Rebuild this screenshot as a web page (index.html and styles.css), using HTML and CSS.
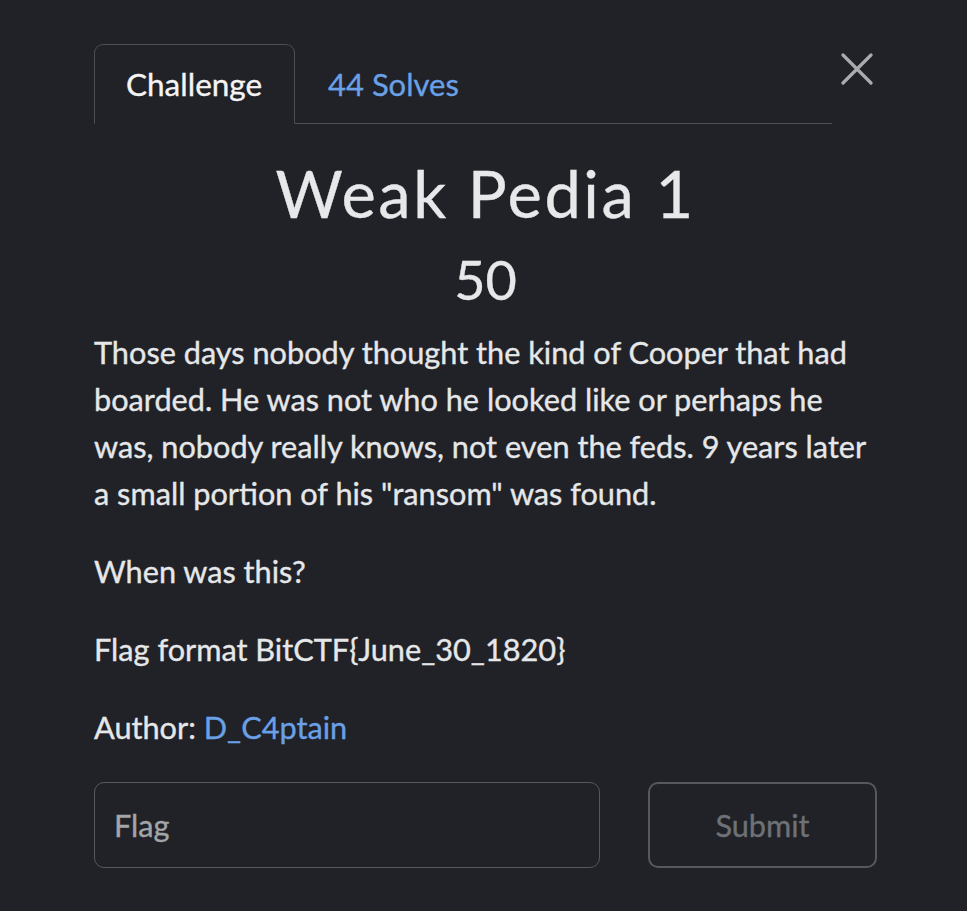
FILE: index.html
```html
<!DOCTYPE html>
<html>
<head>
<meta charset="utf-8">
<link rel="stylesheet" href="styles.css">
</head>
<body>
<div class="modal">
  <div class="top">
    <ul class="tabs">
      <li class="tab active">Challenge</li>
      <li class="tab link">44 Solves</li>
    </ul>
    <button class="close" aria-label="Close">
      <svg width="32" height="32" viewBox="0 0 32 32"><path d="M2 2L30 30M30 2L2 30" stroke="#a9abae" stroke-width="3.2" stroke-linecap="round"/></svg>
    </button>
  </div>
  <h2 class="title">Weak Pedia 1</h2>
  <h3 class="value">50</h3>
  <div class="desc">
    <p>Those days nobody thought the kind of Cooper that had boarded. He was not who he looked like or perhaps he was, nobody really knows, not even the feds. 9 years later a small portion of his "ransom" was found.</p>
    <p>When was this?</p>
    <p>Flag format BitCTF{June_30_1820}</p>
    <p>Author: <a class="author">D_C4ptain</a></p>
  </div>
  <div class="form">
    <div class="input">Flag</div>
    <button class="submit">Submit</button>
  </div>
</div>
</body>
</html>
```
FILE: styles.css
```css
html, body {
  margin: 0;
  background: #202227;
  height: 100%;
}
body {
  font-family: Lato, "Open Sans", sans-serif;
  color: #e6e7e9;
  -webkit-text-stroke: 0.35px currentColor;
}
.modal {
  width: 783px;
  padding: 44px 0 0 94px;
}
.top {
  display: flex;
  align-items: flex-start;
}
.tabs {
  list-style: none;
  margin: 0;
  padding: 0;
  display: flex;
  width: 738px;
  flex-shrink: 0;
  border-bottom: 1px solid #4b4e54;
}
.tab {
  box-sizing: border-box;
  height: 80px;
  padding: 0 32px;
  display: flex;
  align-items: center;
  font-size: 31px;
  margin-bottom: -1px;
  border: 1px solid transparent;
  border-radius: 9px 9px 0 0;
}
.tab.active {
  border-color: #4b4e54;
  border-bottom-color: #202227;
  color: #f4f4f5;
  width: 201px;
  padding-left: 31px;
  font-size: 31.5px;
}
.tab.link {
  color: #6aa0e6;
}
.close {
  margin-left: 8px;
  margin-top: 8px;
  background: none;
  border: none;
  padding: 0;
  width: 34px;
  height: 34px;
  display: flex;
  align-items: center;
  justify-content: center;
}
.title {
  margin: 30px 0 0;
  text-align: center;
  font-weight: 400;
  font-size: 65px;
  line-height: 78px;
  letter-spacing: 2.5px;
  color: #e7e8ea;
}
.value {
  margin: 16px 0 0;
  text-align: center;
  font-weight: 400;
  font-size: 54px;
  line-height: 64px;
  color: #e7e8ea;
}
.desc {
  margin-top: 17px;
  font-size: 30.7px;
  line-height: 47px;
}
.desc p {
  margin: 0 0 31px;
}
.author {
  color: #6aa0e6;
}
.form {
  display: flex;
  gap: 48px;
  margin-top: 6px;
}
.input {
  flex: 1;
  box-sizing: border-box;
  height: 86px;
  border: 1px solid #55585e;
  border-radius: 10px;
  display: flex;
  align-items: center;
  padding-left: 19px;
  font-size: 30.7px;
  color: #a3a5a8;
}
.submit {
  width: 229px;
  height: 86px;
  background: transparent;
  border: 2px solid #55585e;
  border-radius: 10px;
  font-family: Lato, sans-serif;
  font-size: 30.7px;
  color: #6e7176;
  -webkit-text-stroke: 0.35px currentColor;
}
```
